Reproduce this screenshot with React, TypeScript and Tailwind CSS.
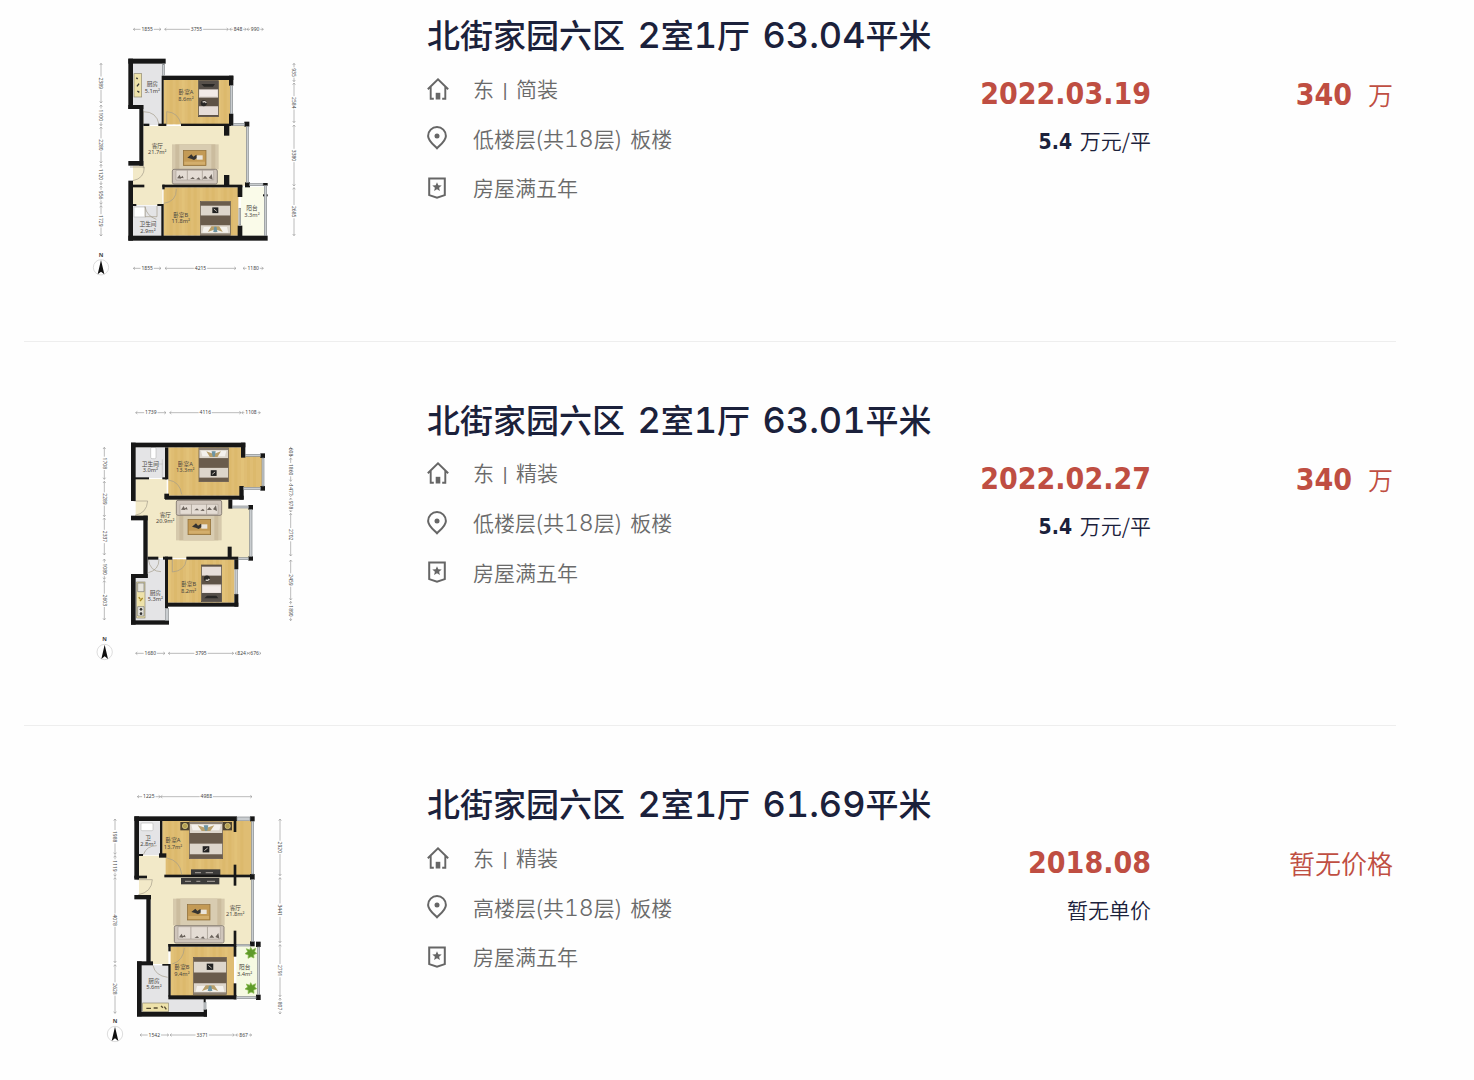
import type { ReactNode } from "react";

type Box = [x: number, y: number, w: number, h: number];
type Segment = [from: number, to: number, label: string];

const WALL = "#171717";
const WOOD = "#dfbd73";
const TILE = "#f2e9c8";
const GREY = "#e4e4e6";

function Room({ points, fill }: { points: string; fill: string }) {
  return <polygon points={points} fill={fill} />;
}

function Planks({ x, y, w, h }: { x: number; y: number; w: number; h: number }) {
  const count = Math.floor(w / 18);
  return (
    <g>
      <rect x={x} y={y} width={w} height={h} fill={WOOD} />
      {Array.from({ length: count }, (_, i) => (
        <rect key={i} x={x + i * 18} y={y} width={9} height={h} fill={i % 3 === 0 ? "#e8ca82" : "#d8b15f"} opacity={0.35} />
      ))}
    </g>
  );
}

function Walls({ boxes, fill = WALL }: { boxes: Box[]; fill?: string }) {
  return (
    <g fill={fill}>
      {boxes.map(([x, y, w, h], i) => (
        <rect key={i} x={x} y={y} width={w} height={h} />
      ))}
    </g>
  );
}

function Windows({ boxes }: { boxes: Box[] }) {
  return (
    <g fill="#c9cdd0" stroke="#85898c" strokeWidth={2}>
      {boxes.map(([x, y, w, h], i) => (
        <rect key={i} x={x} y={y} width={w} height={h} />
      ))}
    </g>
  );
}

// Double bed, headboard on top unless flipped
function Bed({ x, y, w, h, flip }: { x: number; y: number; w: number; h: number; flip?: boolean }) {
  return (
    <g transform={flip ? `translate(${x} ${y + h}) scale(1 -1)` : `translate(${x} ${y})`}>
      <rect width={w} height={h} fill="#ddd6cb" stroke="#5d5349" strokeWidth={2} />
      <rect width={w} height={6} fill="#8c8072" />
      <path d={`M6 8h${w / 2 - 9}v17h-${w / 2 - 13}zM${w / 2 + 3} 8h${w / 2 - 9}l-4 17h-${w / 2 - 13}z`} fill="#f4f1ec" />
      <path d={`M${w * 0.25} 10l${w * 0.25} 8 ${w * 0.25}-8-${w * 0.12} 17h-${w * 0.26}z`} fill="#b9a06b" />
      <path d={`M${w * 0.43} 10h${w * 0.14}l-3 16h-${w * 0.07}z`} fill="#6d95a3" />
      <rect y={h * 0.3} width={w} height={h * 0.29} fill="#6a5c4c" />
      <rect y={h * 0.88} width={w} height={h * 0.12} fill="#6a5c4c" />
      <rect x={w * 0.4} y={h * 0.66} width={w * 0.2} height={h * 0.17} fill="#222" />
      <path d={`M${w * 0.45} ${h * 0.78}l${w * 0.1} -${h * 0.07}`} stroke="#c5bfb5" strokeWidth={3} />
    </g>
  );
}

// Single bed with a dark headboard strip
function SingleBed({ x, y, w, h, flip }: { x: number; y: number; w: number; h: number; flip?: boolean }) {
  return (
    <g transform={flip ? `translate(${x} ${y + h}) scale(1 -1)` : `translate(${x} ${y})`}>
      <rect width={w} height={h} fill="#e6ddd8" stroke="#4a423b" strokeWidth={2} />
      <rect width={w} height={26} fill="#57504a" />
      <path d={`M8 10h${w - 18}l-6 8h-${w - 32}z`} fill="#292725" />
      <path d={`M4 28h${w - 8}v18h-${w - 8}z`} fill="#f3ebe8" />
      <rect y={h * 0.47} width={w} height={h * 0.24} fill="#5e5246" />
      <circle cx={w * 0.26} cy={h * 0.63} r={9} fill="#292725" />
      <path d={`M${w * 0.2} ${h * 0.6}q6-5 11 2`} stroke="#d8d1c9" strokeWidth={4} fill="none" />
      <rect y={h - 5} width={w} height={5} fill="#5e5246" />
    </g>
  );
}

function Sofa({ x, y, w, h, flip }: { x: number; y: number; w: number; h: number; flip?: boolean }) {
  return (
    <g transform={`translate(${x} ${y})`}>
      <g transform={flip ? `translate(0 ${h}) scale(1 -1)` : undefined}>
        <rect width={w} height={h} rx={5} fill="#cfc5bb" stroke="#7d746b" strokeWidth={2.5} />
        <path d={`M11 ${h - 3}V12h${w - 22}v${h - 15}z`} fill="#e4dcd4" stroke="#9b9288" strokeWidth={1.5} />
        <path d={`M${w / 3} 12v${h - 15}M${(w * 2) / 3} 12v${h - 15}`} stroke="#9b9288" strokeWidth={2} />
      </g>
      <path
        d={`M14 ${h - 17}l8-11 5 12zM24 ${h - 19}l7-6 3 8zM${w / 2 - 14} ${h - 15}l8-6 6 6zM${w / 2 + 4} ${h - 14}l8-6 5 7zM${w - 44} ${h - 16}l7-9 8 9zM${w - 26} ${h - 18}l9-12 3 17z`}
        fill="#6b635c"
      />
    </g>
  );
}

function Table({ x, y }: { x: number; y: number }) {
  return (
    <g transform={`translate(${x} ${y})`}>
      <rect width={68} height={46} fill="#c39a55" stroke="#8b6a35" strokeWidth={2} />
      <rect x={3} y={34} width={62} height={9} fill="#d3ae6c" />
      <path d="M12 22l12-10 6 7 9-6 5 8-12 8-9-4z" fill="#353331" />
      <rect x={40} y={15} width={18} height={13} fill="#eae4da" />
    </g>
  );
}

function Rug({ x, y, w, h }: { x: number; y: number; w: number; h: number }) {
  return (
    <g>
      <rect x={x} y={y} width={w} height={h} fill="#d6c9ac" />
      <rect x={x + 10} y={y} width={w - 20} height={h} fill="#cbbc9e" />
      <rect x={x + 22} y={y} width={w - 44} height={h} fill="#d8ccb1" />
    </g>
  );
}

function RoomLabel({ x, y, name, area }: { x: number; y: number; name: string; area: string }) {
  return (
    <g fontSize={17} fill="#4a463f" textAnchor="middle">
      <text x={x} y={y}>{name}</text>
      <text x={x} y={y + 19}>{area}</text>
    </g>
  );
}

// Row of measured segments; vertical rows turn the label clockwise
function Dims({ at, segments, vertical }: { at: number; segments: Segment[]; vertical?: boolean }) {
  return (
    <g transform={vertical ? `translate(${at} 0) rotate(90)` : `translate(0 ${at})`} fontSize={15} fill="#444" textAnchor="middle">
      {segments.map(([from, to, label]) => {
        const mid = (from + to) / 2;
        const gap = label.length * 4.5 + 2;
        return (
          <g key={`${from}-${label}`}>
            {to - from > gap * 2 && (
              <path
                d={`M${from + 2} 0H${mid - gap}M${mid + gap} 0H${to - 2}M${from + 7} -4l-5 4 5 4M${to - 7} -4l5 4-5 4`}
                stroke="#9a9a9a"
                strokeWidth={2}
                fill="none"
              />
            )}
            <text x={mid} y={5}>{label}</text>
          </g>
        );
      })}
    </g>
  );
}

function Compass({ x, y }: { x: number; y: number }) {
  return (
    <g transform={`translate(${x} ${y})`}>
      <circle r={23} fill="#fff" stroke="#ccc" strokeWidth={2} />
      <path d="M0 -22L10 21 0 13-10 21z" fill="#111" />
      <text y={-32} fontSize={17} fontWeight={700} fill="#444" textAnchor="middle">N</text>
    </g>
  );
}

function Door({ d }: { d: string }) {
  return <path d={d} fill="none" stroke="#a39c8a" strokeWidth={2} />;
}

function Plan({ children }: { children: ReactNode }) {
  return (
    <svg width={220} height={265} viewBox="0 0 660 795" className="block shrink-0 font-['Noto_Sans','Noto_Sans_CJK_SC',sans-serif]">
      {children}
    </svg>
  );
}

function PlanA() {
  return (
    <Plan>
      <Room points="144,146 234,146 232,330 175,330 175,270 144,270" fill={GREY} />
      <Planks x={236} y={195} w={199} h={133} />
      <Room points="175,333 487,333 487,512 232,512 232,570 144,570 144,452 175,452" fill={TILE} />
      <Room points="144,572 232,572 232,662 144,662" fill={GREY} />
      <Planks x={236} y={517} w={224} h={145} />
      <Room points="468,516 538,516 538,662 468,662" fill="#fafbe9" />
      <rect x={147} y={176} width={23} height={70} fill="#eee2aa" stroke="#8d8770" strokeWidth={2} />
      <path d="M154 188l4 4m4 14l-6 8m1 14l6 4" stroke="#333" strokeWidth={4} />
      <SingleBed x={341} y={197} w={59} h={108} />
      <Rug x={261} y={388} w={140} h={75} />
      <Table x={295} y={406} />
      <Sofa x={262} y={463} w={135} h={44} flip />
      <Bed x={346} y={560} w={90} h={101} flip />
      <rect x={147} y={576} width={34} height={30} fill="#fff" stroke="#bbb" strokeWidth={2} />
      <Door d="M175 330V290Q215 290 222 328M245 328V290Q280 292 288 328M175 452V460M135 456H178Q178 490 144 497M236 565Q275 560 274 522M180 575v30h36v-32M180 575q5 28 34 38" />
      <Walls
        boxes={[
          [130, 131, 112, 15], [130, 131, 14, 151], [130, 270, 45, 12], [163, 270, 12, 182], [130, 438, 45, 14],
          [232, 182, 213, 13], [230, 182, 6, 150], [432, 182, 13, 30], [432, 296, 13, 36], [175, 326, 18, 7],
          [220, 326, 24, 7], [288, 326, 150, 7], [478, 320, 15, 15], [417, 332, 16, 30], [417, 480, 16, 32],
          [130, 497, 14, 180], [144, 509, 34, 8], [232, 509, 240, 8], [232, 509, 7, 14], [130, 662, 418, 15],
          [229, 567, 7, 96], [144, 567, 10, 6], [217, 567, 15, 6], [458, 512, 14, 34], [458, 632, 14, 32],
          [480, 502, 15, 15], [534, 504, 14, 8], [534, 538, 14, 6],
        ]}
      />
      <Windows boxes={[[233, 147, 5, 34], [436, 212, 7, 84], [445, 325, 33, 6], [484, 335, 6, 167], [494, 506, 40, 6], [538, 512, 7, 150], [462, 580, 5, 50]]} />
      <RoomLabel x={202} y={214} name="厨房" area="5.1m²" />
      <RoomLabel x={303} y={238} name="卧室A" area="8.6m²" />
      <RoomLabel x={217} y={398} name="客厅" area="21.7m²" />
      <RoomLabel x={287} y={606} name="卧室B" area="11.8m²" />
      <RoomLabel x={189} y={634} name="卫生间" area="2.9m²" />
      <RoomLabel x={501} y={586} name="阳台" area="3.3m²" />
      <Dims at={43} segments={[[143, 230, "1855"], [237, 432, "3755"], [432, 486, "848"], [484, 537, "990"]]} />
      <Dims at={760} segments={[[143, 230, "1855"], [238, 455, "4215"], [472, 537, "1180"]]} />
      <Dims at={48} vertical segments={[[143, 266, "2389"], [268, 334, "1100"], [334, 446, "2280"], [446, 511, "1120"], [511, 570, "956"], [570, 665, "1729"]]} />
      <Dims at={627} vertical segments={[[143, 202, "935"], [202, 325, "2584"], [328, 515, "3380"], [516, 664, "2685"]]} />
      <Compass x={48} y={757} />
    </Plan>
  );
}

function PlanB() {
  return (
    <Plan>
      <Room points="152,142 242,142 242,234 152,234" fill={GREY} />
      <Planks x={250} y={142} w={218} h={145} />
      <Planks x={468} y={168} w={64} h={94} />
      <Room points="152,237 245,237 245,298 436,298 436,325 496,325 496,474 188,474 188,350 152,350" fill={TILE} />
      <Room points="188,478 240,478 240,662 152,662 152,534 188,534" fill={GREY} />
      <Planks x={249} y={478} w={199} h={130} />
      <rect x={197} y={142} width={16} height={34} rx={4} fill="#fff" stroke="#bbb" strokeWidth={2} />
      <path d="M232 178v54M205 192h28" stroke="#bbb" strokeWidth={2} />
      <Bed x={342} y={144} w={88} h={101} />
      <Rug x={273} y={345} w={137} h={76} />
      <Table x={309} y={358} />
      <Sofa x={274} y={301} w={136} h={45} />
      <SingleBed x={350} y={495} w={60} h={110} flip />
      <rect x={155} y={546} width={25} height={108} fill="#eee2aa" stroke="#8d8770" strokeWidth={2} />
      <path d="M158 549h19v26h-19zM158 620h19v28h-19z" fill="#e6e4dc" stroke="#777" strokeWidth={2} />
      <path d="M161 592l5 5m7-3l-8 9" stroke="#a98b25" strokeWidth={4} />
      <circle cx={168} cy={628} r={4} fill="#333" />
      <circle cx={168} cy={641} r={4} fill="#333" />
      <Door d="M146 303H188Q185 340 150 346M250 240Q285 245 290 283M190 478Q195 515 228 515M262 478v38Q300 512 304 480M222 478Q222 510 190 518" />
      <Walls
        boxes={[
          [138, 128, 343, 14], [138, 128, 14, 175], [240, 142, 10, 96], [150, 232, 42, 6], [232, 232, 14, 6],
          [468, 128, 13, 45], [463, 258, 13, 41], [240, 287, 236, 12], [238, 281, 14, 16], [430, 298, 12, 28],
          [490, 315, 14, 14], [138, 347, 50, 14], [175, 347, 13, 187], [138, 522, 50, 12], [138, 522, 14, 152],
          [138, 661, 114, 13], [240, 470, 9, 155], [188, 470, 32, 9], [234, 470, 28, 9], [304, 470, 156, 9],
          [428, 440, 12, 32], [490, 469, 14, 13], [448, 478, 12, 30], [448, 582, 12, 38], [240, 608, 220, 12],
          [526, 160, 14, 14], [526, 258, 14, 14],
        ]}
      />
      <Windows boxes={[[481, 163, 45, 6], [476, 262, 50, 6], [531, 174, 6, 84], [442, 318, 48, 6], [494, 329, 7, 140], [460, 473, 30, 6], [450, 508, 7, 74], [242, 625, 8, 36]]} />
      <RoomLabel x={196} y={198} name="卫生间" area="3.0m²" />
      <RoomLabel x={301} y={197} name="卧室A" area="13.3m²" />
      <RoomLabel x={241} y={351} name="客厅" area="20.9m²" />
      <RoomLabel x={311} y={559} name="卧室B" area="8.2m²" />
      <RoomLabel x={211} y={584} name="厨房" area="5.3m²" />
      <Dims at={38} segments={[[150, 245, "1739"], [252, 470, "4116"], [468, 528, "1108"]]} />
      <Dims at={760} segments={[[150, 242, "1680"], [248, 448, "3795"], [448, 492, "824"], [488, 530, "676"]]} />
      <Dims at={58} vertical segments={[[140, 240, "1708"], [242, 352, "2289"], [352, 467, "2337"], [475, 540, "1080"], [540, 662, "2603"]]} />
      <Dims at={617} vertical segments={[[140, 172, "608"], [172, 246, "1860"], [248, 292, "1477"], [292, 338, "978"], [338, 470, "2702"], [478, 602, "2459"], [602, 664, "1890"]]} />
      <Compass x={59} y={756} />
    </Plan>
  );
}

function Plant({ x, y }: { x: number; y: number }) {
  return (
    <path
      transform={`translate(${x} ${y})`}
      d="M0-17l5 8 10-5-3 10 6 5-9 4 1 10-9-4-9 5 1-10-10-4 8-6-4-9 10 4z"
      fill="#5f9a2a"
      stroke="#86b94b"
      strokeWidth={2}
    />
  );
}

function PlanC() {
  return (
    <Plan>
      <Room points="162,112 226,112 226,213 162,213" fill={GREY} />
      <Planks x={232} y={111} w={268} h={163} />
      <Room points="162,215 242,215 242,280 500,280 500,482 250,482 250,540 197,540 197,345 162,345" fill={TILE} />
      <Planks x={257} y={488} w={190} h={148} />
      <Room points="454,485 520,485 520,638 454,638" fill="#f6fae2" />
      <Room points="170,544 251,544 251,640 356,640 356,685 170,685" fill={GREY} />
      <rect x={168} y={117} width={36} height={23} rx={3} fill="#fff" stroke="#bbb" strokeWidth={2} />
      <Bed x={313} y={114} w={100} h={110} />
      <Walls fill="#4e4330" boxes={[[286, 114, 27, 25], [414, 114, 27, 25]]} />
      <g fill="#b5a154" stroke="#e0d08a" strokeWidth={2}>
        <circle cx={300} cy={126} r={8} />
        <circle cx={428} cy={126} r={8} />
      </g>
      <Walls fill="#3c3b3a" boxes={[[318, 256, 88, 19], [288, 282, 115, 19]]} />
      <path d="M330 266h18m14 0h22M300 292h18m16 0h12m20 0h24" stroke="#96918b" strokeWidth={4} />
      <Rug x={264} y={344} w={155} h={80} />
      <Table x={307} y={362} />
      <Sofa x={268} y={425} w={149} h={52} flip />
      <Bed x={326} y={520} w={98} h={111} flip />
      <rect x={173} y={657} width={77} height={26} fill="#eee2aa" stroke="#8d8770" strokeWidth={2} />
      <path d="M184 673h14m8-1h12m10-6l6 5m4-3l6 8" stroke="#554b31" strokeWidth={4} />
      <Plant x={497} y={507} />
      <Plant x={497} y={613} />
      <Door d="M155 287H202Q200 325 160 332M246 222Q285 230 290 270M298 492Q295 530 262 540M204 544Q210 575 248 580M175 212Q185 185 215 185" />
      <Walls
        boxes={[
          [148, 97, 308, 14], [148, 97, 14, 190], [225, 111, 7, 102], [162, 210, 12, 6], [222, 208, 22, 13],
          [148, 275, 38, 8], [238, 272, 262, 8], [495, 97, 14, 15], [495, 270, 14, 17], [446, 111, 8, 33],
          [446, 242, 8, 63], [148, 333, 50, 13], [184, 333, 13, 210], [156, 532, 48, 12], [156, 532, 14, 165],
          [156, 684, 210, 14], [356, 676, 10, 22], [250, 480, 205, 8], [250, 480, 7, 22], [250, 540, 7, 98],
          [232, 540, 20, 5], [250, 634, 205, 12], [446, 440, 8, 78], [446, 598, 8, 48], [495, 472, 14, 15],
          [513, 473, 14, 16], [513, 632, 14, 16], [356, 645, 6, 10],
        ]}
      />
      <Windows boxes={[[456, 99, 39, 10], [500, 112, 6, 158], [500, 287, 6, 185], [518, 489, 6, 143], [455, 638, 58, 6], [357, 655, 6, 21], [455, 482, 40, 4]]} />
      <RoomLabel x={189} y={167} name="卫" area="2.8m²" />
      <RoomLabel x={264} y={175} name="卧室A" area="13.7m²" />
      <RoomLabel x={451} y={377} name="客厅" area="21.8m²" />
      <RoomLabel x={291} y={556} name="卧室B" area="9.4m²" />
      <RoomLabel x={479} y={556} name="阳台" area="3.4m²" />
      <RoomLabel x={207} y={597} name="厨房" area="5.6m²" />
      <Dims at={38} segments={[[155, 228, "1225"], [225, 503, "4988"]]} />
      <Dims at={753} segments={[[163, 253, "1542"], [253, 450, "3371"], [450, 502, "867"]]} />
      <Dims at={90} vertical segments={[[103, 213, "1988"], [213, 279, "1119"], [279, 538, "4078"], [540, 690, "2628"]]} />
      <Dims at={585} vertical segments={[[103, 277, "2920"], [279, 478, "3441"], [480, 640, "2791"], [640, 692, "807"]]} />
      <Compass x={90} y={750} />
    </Plan>
  );
}

function HouseIcon() {
  return (
    <svg width={22} height={22} viewBox="0 0 22 22" fill="none" stroke="#666" strokeWidth={1.9}>
      <path d="M.8 11.3L11 1.3l10.2 10M3.7 9v11.8H6.8M18.3 9v11.8h-3.1" />
      <path d="M8.7 21.5v-6.700h4.600v6.700z" fill="#666" stroke="none" />
    </svg>
  );
}

function PinIcon() {
  return (
    <svg width={22} height={24} viewBox="0 0 22 24" fill="none">
      <path d="M10 22.2C6.5 18.6 1.1 14.7 1.1 9.9a8.9 8.9 0 0 1 17.8 0c0 4.8-5.4 8.7-8.9 12.3z" stroke="#666" strokeWidth={2} />
      <circle cx={10} cy={10} r={2.5} fill="#666" />
    </svg>
  );
}

function BadgeIcon() {
  return (
    <svg width={22} height={22} viewBox="0 0 22 22" fill="none">
      <path d="M2.200 1.500h15.600v16.600l-7.800 2.600-7.800-2.600z" stroke="#666" strokeWidth={2} />
      <path d="M10 5.200l1.300 3.100 3.400.3-2.600 2.200.8 3.300-2.900-1.800-2.900 1.800.8-3.300-2.600-2.200 3.400-.3z" fill="#666" />
    </svg>
  );
}

function InfoRow({ icon, children }: { icon: ReactNode; children: ReactNode }) {
  return (
    <div className="flex h-[49.5px] items-center">
      <span className="w-[46px] shrink-0">{icon}</span>
      <span className="whitespace-nowrap">{children}</span>
    </div>
  );
}

interface Listing {
  size: string;
  decoration: string;
  floor: string;
  date: string;
  total?: string;
  unit?: string;
  plan: ReactNode;
}

const listings: Listing[] = [
  { size: "63.04", decoration: "简装", floor: "低", date: "2022.03.19", total: "340", unit: "5.4", plan: <PlanA /> },
  { size: "63.01", decoration: "精装", floor: "低", date: "2022.02.27", total: "340", unit: "5.4", plan: <PlanB /> },
  { size: "61.69", decoration: "精装", floor: "高", date: "2018.08", plan: <PlanC /> },
];

function Num({ children }: { children: ReactNode }) {
  return <span className="font-['Inter',sans-serif] text-[36px] leading-none tabular-nums">{children}</span>;
}

function ListingRow({ size, decoration, floor, date, total, unit, plan }: Listing) {
  return (
    <li className="flex h-[384.6px] shrink-0 border-b border-[#eee] pt-[58px] last:border-b-0">
      <div className="w-[403px] shrink-0 pl-[61px]">{plan}</div>
      <div className="w-[530px] shrink-0">
        <h2 className="-mt-px flex h-[42px] items-center whitespace-pre text-[33px] font-medium text-[#1b213b] [word-spacing:5px]">
          <span>北街家园六区 <Num>2</Num>室<Num>1</Num>厅 <Num>{size}</Num>平米</span>
        </h2>
        <div className="mt-2 text-[21px] font-[350] text-[#6a6a6a] [word-spacing:4px]">
          <InfoRow icon={<HouseIcon />}>
            东 <span className="relative -top-px font-['Liberation_Sans',sans-serif] text-[18px]">|</span> {decoration}
          </InfoRow>
          <InfoRow icon={<PinIcon />}>
            {floor}楼层(共<span className="font-['Inter',sans-serif] text-[23px] font-light leading-none tabular-nums">18</span>层) 板楼
          </InfoRow>
          <InfoRow icon={<BadgeIcon />}>房屋满五年</InfoRow>
        </div>
      </div>
      <div className="w-[194px] shrink-0 pt-[57px] text-right">
        <p className="font-['DejaVu_Sans_Condensed','DejaVu_Sans',sans-serif] text-[30px] font-bold leading-[44px] text-[#bf4e42] [font-stretch:condensed]">
          {date}
        </p>
        <p className="mt-1 text-[21px] font-[350] leading-[40px] text-[#1b213b] [word-spacing:3px]">
          {unit ? (
            <>
              <b className="font-['DejaVu_Sans_Condensed','DejaVu_Sans',sans-serif] font-bold [font-stretch:condensed]">{unit}</b> 万元/平
            </>
          ) : (
            "暂无单价"
          )}
        </p>
      </div>
      <div className="flex-1 pr-[3px] pt-[57px] text-right text-[26px] font-[350] leading-[44px] text-[#bf4e42]">
        {total ? (
          <p className="flex items-baseline justify-end gap-4">
            <b className="font-['DejaVu_Sans_Condensed','DejaVu_Sans',sans-serif] text-[30px] font-bold [font-stretch:condensed]">{total}</b>
            <span className="text-[25px]">万</span>
          </p>
        ) : (
          <p>暂无价格</p>
        )}
      </div>
    </li>
  );
}

export default function App() {
  return (
    <main className="h-[1080px] w-[1474px] overflow-hidden bg-[#fefefe] font-['Noto_Sans_CJK_SC',sans-serif]">
      <ul className="-mt-[43px] ml-6 flex w-[1372px] flex-col">
        {listings.map((item) => (
          <ListingRow key={item.size} {...item} />
        ))}
      </ul>
    </main>
  );
}
